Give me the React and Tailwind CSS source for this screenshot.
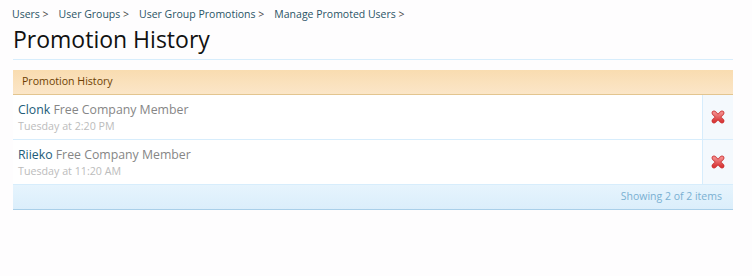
import React from "react";

function DeleteIcon() {
  return (
    <svg width="14" height="14" viewBox="0 0 14 14">
      <defs>
        <linearGradient id="xg" x1="0" y1="0" x2="0" y2="1">
          <stop offset="0" stopColor="#f28a8a" />
          <stop offset="1" stopColor="#d93a3a" />
        </linearGradient>
      </defs>
      <path
        d="M3 3 L11 11 M11 3 L3 11"
        stroke="#c93030"
        strokeWidth="4.6"
        strokeLinecap="round"
      />
      <path
        d="M3 3 L11 11 M11 3 L3 11"
        stroke="url(#xg)"
        strokeWidth="3.2"
        strokeLinecap="round"
      />
    </svg>
  );
}

const rows = [
  { name: "Clonk", group: "Free Company Member", date: "Tuesday at 2:20 PM" },
  { name: "Riieko", group: "Free Company Member", date: "Tuesday at 11:20 AM" },
];

export default function App() {
  return (
    <div
      className="w-[752px] h-[276px] bg-[#fefdfe] pt-[7px]"
      style={{ fontFamily: '"Open Sans", "DejaVu Sans", sans-serif' }}
    >
      <div className="pl-[12px] pr-[19px]">
        <div className="flex text-[10.5px] text-[#2a5466] leading-[14px] h-[14px]">
          {["Users", "User Groups", "User Group Promotions", "Manage Promoted Users"].map((c) => (
            <span key={c} className="mr-[10px]">
              {c} <span className="text-[#444]">&gt;</span>
            </span>
          ))}
        </div>
        <div className="ml-[1px] border-b border-[#d7edfc] pb-[4px]">
          <h1 className="text-[23px] leading-[32px] text-[#111] pt-[2px]">Promotion History</h1>
        </div>
        <div className="ml-[1px] mt-[10px]">
          <div className="h-[25px] flex items-center pl-[9px] text-[10.6px] text-[#6d3f03] bg-gradient-to-b from-[#f9dcb0] to-[#fbe6c8] border-b border-[#e3c58f]">
            Promotion History
          </div>
          {rows.map((r) => (
            <div key={r.name} className="flex h-[45px] border-b border-[#d7edfc] bg-white">
              <div className="flex-1 pl-[5px] pt-[7px]">
                <div className="text-[12.3px] leading-[16px]">
                  <span className="text-[#225c79]">{r.name}</span>{" "}
                  <span className="text-[#868686]">{r.group}</span>
                </div>
                <div className="text-[10.7px] leading-[14px] text-[#bcbcbc] mt-[1px]">{r.date}</div>
              </div>
              <div className="w-[31px] border-l border-[#d7edfc] bg-[#f4f9fd] flex items-center justify-center">
                <DeleteIcon />
              </div>
            </div>
          ))}
          <div className="h-[25px] flex items-center justify-end pr-[11px] text-[10.5px] text-[#7ab0d2] bg-gradient-to-b from-[#e6f4fd] to-[#dbeefb] border-b border-[#a9cfe9]">
            Showing 2 of 2 items
          </div>
        </div>
      </div>
    </div>
  );
}
